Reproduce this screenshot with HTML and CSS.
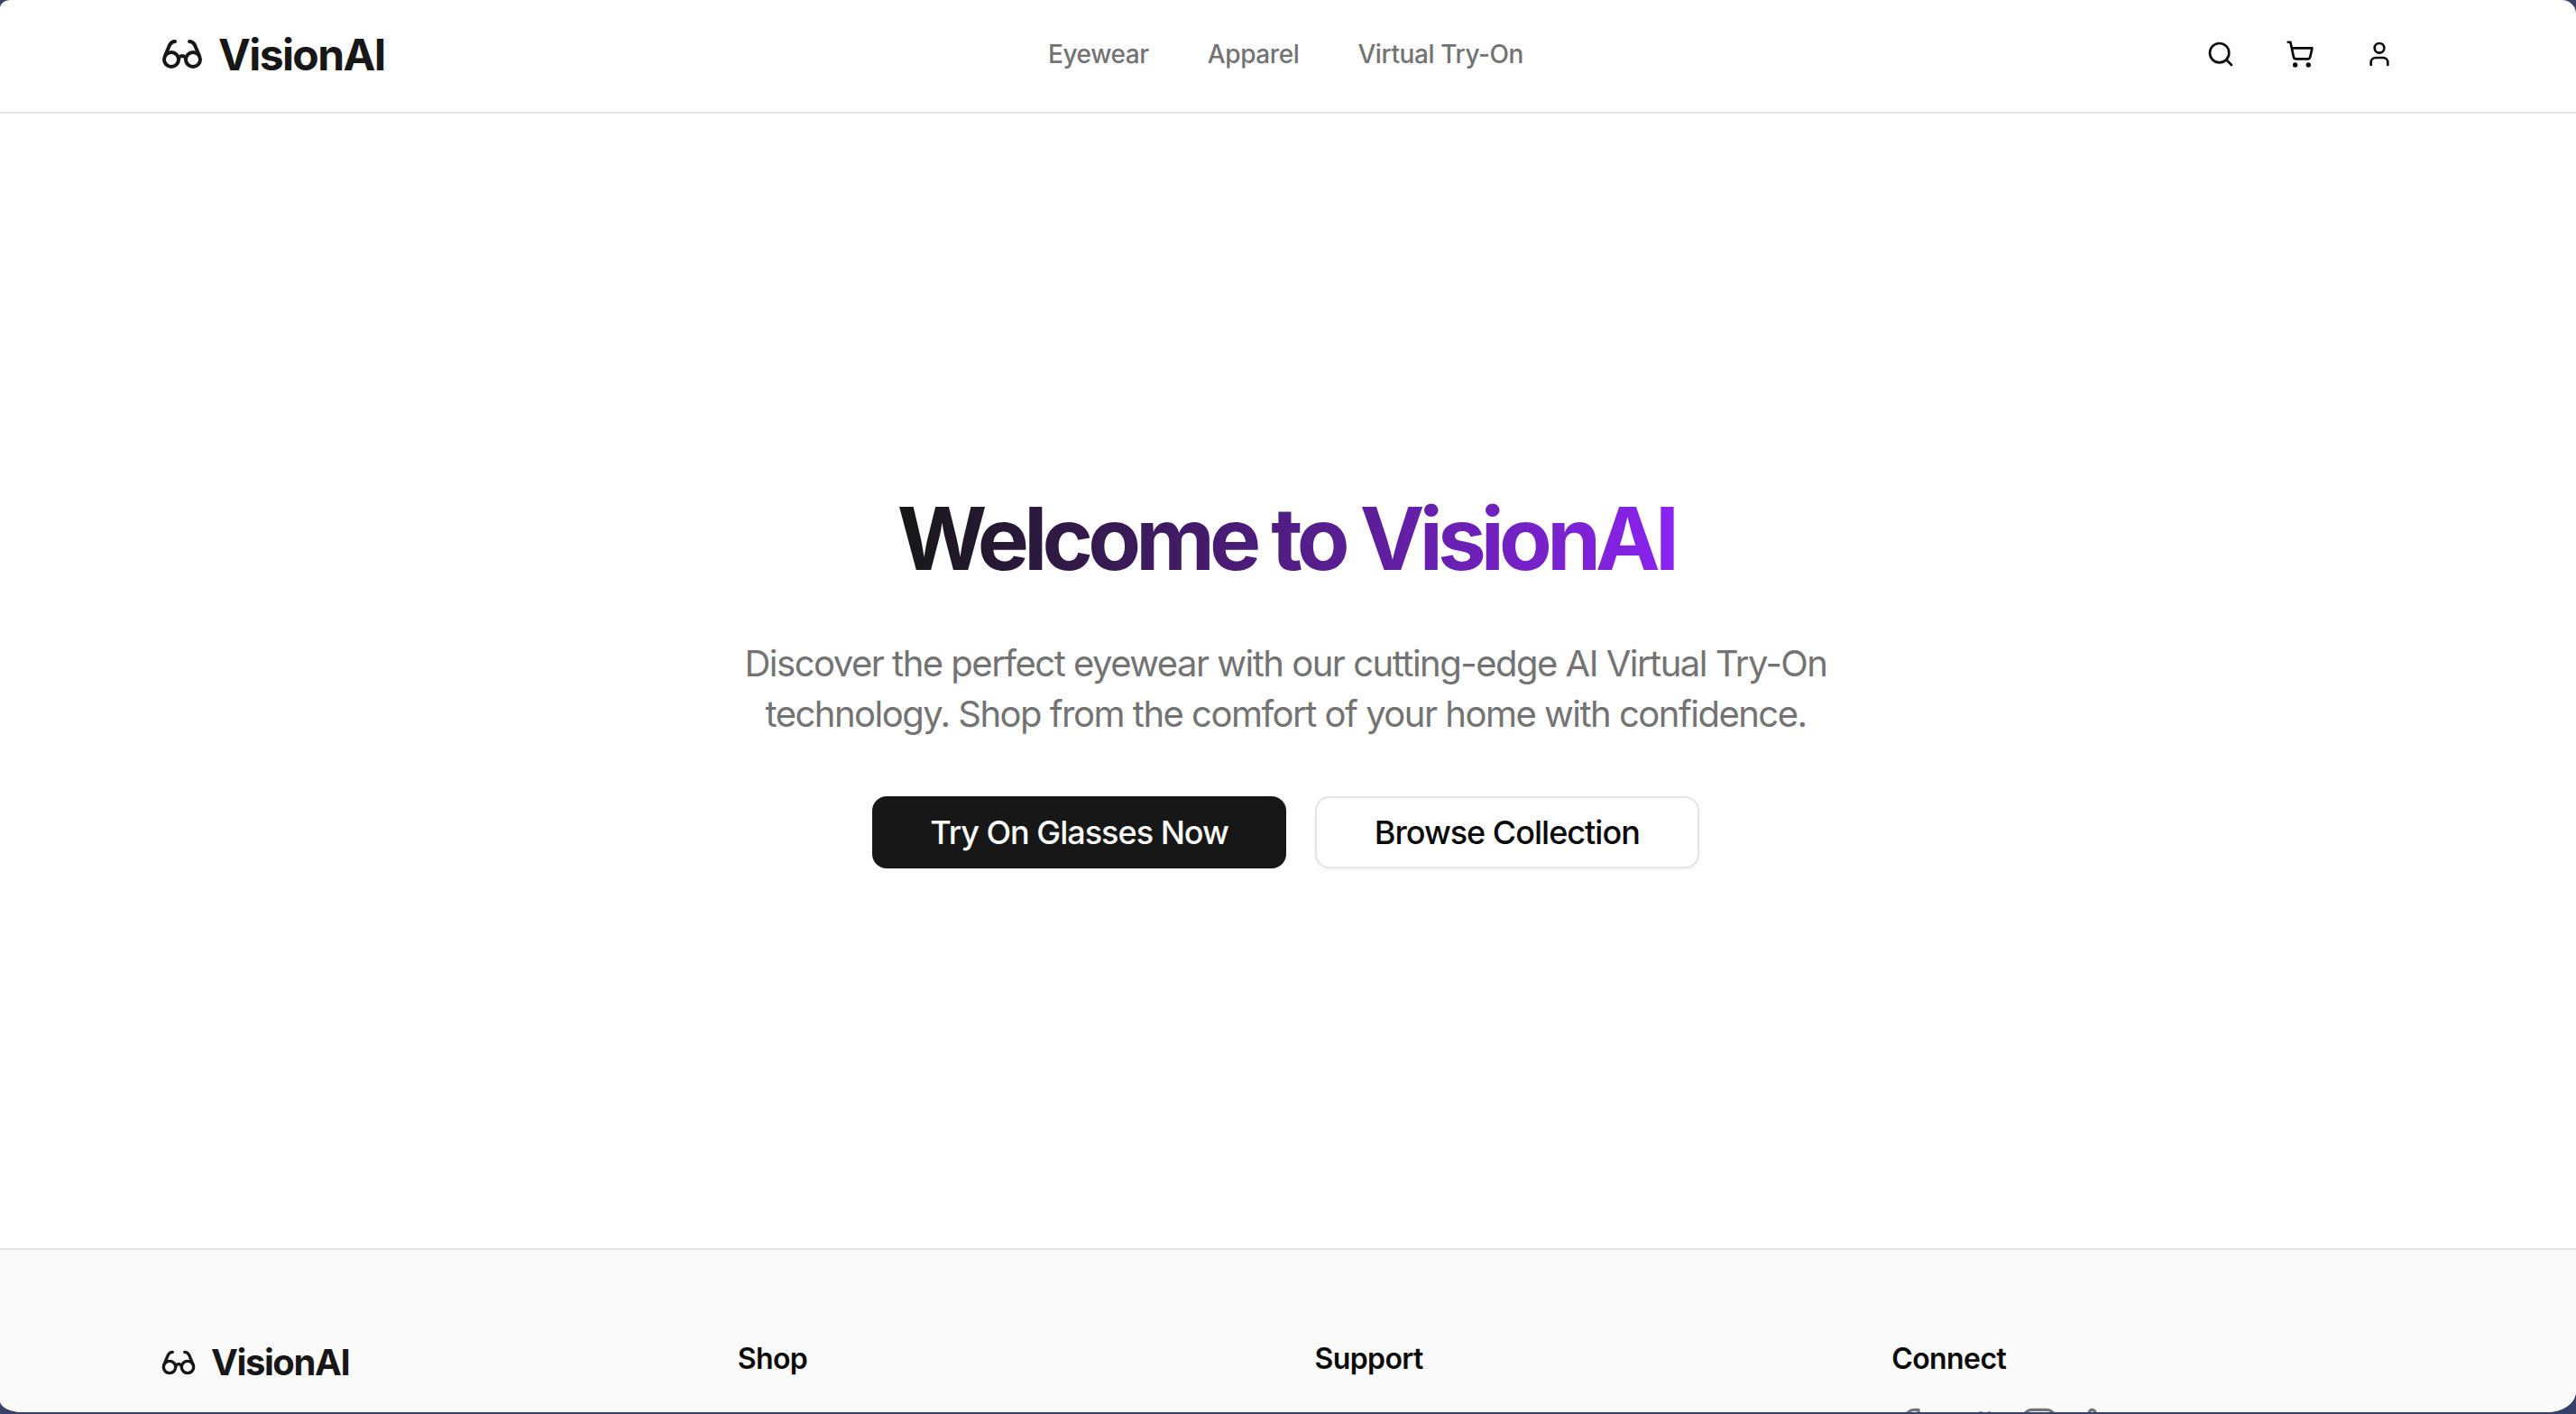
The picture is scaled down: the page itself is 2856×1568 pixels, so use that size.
FILE: index.html
```html
<!DOCTYPE html>
<html lang="en">
<head>
    <meta charset="UTF-8">
    <meta name="viewport" content="width=device-width, initial-scale=1.0">
    <title>VisionAI</title>
    <link rel="stylesheet" href="styles.css">
</head>
<body>
    <div class="window">
        <header class="site-header">
            <div class="inner header-row">
                <a class="logo" href="#">
                    <svg class="logo-icon" viewBox="0 0 24 24" fill="none" stroke="currentColor" stroke-width="2" stroke-linecap="round" stroke-linejoin="round">
                        <circle cx="6" cy="15" r="4"/>
                        <circle cx="18" cy="15" r="4"/>
                        <path d="M14 15a2 2 0 0 0-2-2 2 2 0 0 0-2 2"/>
                        <path d="M2.5 13 5 7c.7-1.3 1.4-2 3-2"/>
                        <path d="M21.5 13 19 7c-.7-1.3-1.5-2-3-2"/>
                    </svg>
                    <span>VisionAI</span>
                </a>
                <nav class="main-nav">
                    <a href="#">Eyewear</a>
                    <a href="#">Apparel</a>
                    <a href="#">Virtual Try-On</a>
                </nav>
                <div class="header-icons">
                    <button class="icon-btn" type="button">
                        <svg class="icon" viewBox="0 0 24 24" fill="none" stroke="currentColor" stroke-width="2" stroke-linecap="round" stroke-linejoin="round">
                            <circle cx="11" cy="11" r="8"/>
                            <path d="m21 21-4.3-4.3"/>
                        </svg>
                    </button>
                    <button class="icon-btn" type="button">
                        <svg class="icon" viewBox="0 0 24 24" fill="none" stroke="currentColor" stroke-width="2" stroke-linecap="round" stroke-linejoin="round">
                            <circle cx="8" cy="21" r="1"/>
                            <circle cx="19" cy="21" r="1"/>
                            <path d="M2.05 2.05h2l2.66 12.42a2 2 0 0 0 2 1.58h9.78a2 2 0 0 0 1.95-1.57l1.65-7.43H5.12"/>
                        </svg>
                    </button>
                    <button class="icon-btn" type="button">
                        <svg class="icon" viewBox="0 0 24 24" fill="none" stroke="currentColor" stroke-width="2" stroke-linecap="round" stroke-linejoin="round">
                            <path d="M19 21v-2a4 4 0 0 0-4-4H9a4 4 0 0 0-4 4v2"/>
                            <circle cx="12" cy="7" r="4"/>
                        </svg>
                    </button>
                </div>
            </div>
        </header>

        <main class="hero">
            <h1><span class="gradient-text">Welcome to VisionAI</span></h1>
            <p>Discover the perfect eyewear with our cutting-edge AI Virtual Try-On technology. Shop from the comfort of your home with confidence.</p>
            <div class="hero-buttons">
                <a class="btn btn-dark" href="#">Try On Glasses Now</a>
                <a class="btn btn-light" href="#">Browse Collection</a>
            </div>
        </main>

        <footer class="site-footer">
            <div class="inner footer-grid">
                <div>
                    <a class="logo logo-small" href="#">
                        <svg class="logo-icon" viewBox="0 0 24 24" fill="none" stroke="currentColor" stroke-width="2" stroke-linecap="round" stroke-linejoin="round">
                            <circle cx="6" cy="15" r="4"/>
                            <circle cx="18" cy="15" r="4"/>
                            <path d="M14 15a2 2 0 0 0-2-2 2 2 0 0 0-2 2"/>
                            <path d="M2.5 13 5 7c.7-1.3 1.4-2 3-2"/>
                            <path d="M21.5 13 19 7c-.7-1.3-1.5-2-3-2"/>
                        </svg>
                        <span>VisionAI</span>
                    </a>
                </div>
                <div><h3>Shop</h3></div>
                <div><h3>Support</h3></div>
                <div>
                    <h3>Connect</h3>
                    <div class="social">
                        <svg class="social-icon" viewBox="0 0 24 24" fill="none" stroke="currentColor" stroke-width="2" stroke-linecap="round" stroke-linejoin="round">
                            <path d="M18 2h-3a5 5 0 0 0-5 5v3H7v4h3v8h4v-8h3l1-4h-4V7a1 1 0 0 1 1-1h3z"/>
                        </svg>
                        <svg class="social-icon" viewBox="0 0 24 24" fill="none" stroke="currentColor" stroke-width="2" stroke-linecap="round" stroke-linejoin="round">
                            <path d="M22 4s-.7 2.1-2 3.4c1.6 10-9.4 17.3-18 11.6 2.2.1 4.4-.6 6-2C3 15.5.5 9.8 3 5.2c2.2 2.6 5.6 4.1 9 4-.9-4.2 4-6.6 7-3.8 1.1 0 3-1.4 3-1.4z"/>
                        </svg>
                        <svg class="social-icon" viewBox="0 0 24 24" fill="none" stroke="currentColor" stroke-width="2" stroke-linecap="round" stroke-linejoin="round">
                            <rect width="20" height="20" x="2" y="2" rx="5" ry="5"/>
                            <path d="M16 11.37A4 4 0 1 1 12.63 8 4 4 0 0 1 16 11.37z"/>
                        </svg>
                        <svg class="social-icon" viewBox="0 0 24 24" fill="none" stroke="currentColor" stroke-width="2" stroke-linecap="round" stroke-linejoin="round">
                            <path d="M16 8a6 6 0 0 1 6 6v7h-4v-7a2 2 0 0 0-2-2 2 2 0 0 0-2 2v7h-4v-7a6 6 0 0 1 6-6z"/>
                            <rect width="4" height="12" x="2" y="9"/>
                            <circle cx="4" cy="4" r="2"/>
                        </svg>
                    </div>
                </div>
            </div>
        </footer>
    </div>
</body>
</html>
```

FILE: styles.css
```css
html, body {
    height: 100%;
}

body {
    margin: 0;
    padding: 0;
    overflow: hidden;
    font-family: Inter, "Liberation Sans", sans-serif;
    background-color: #37416a;
    color: #171717;
}

a {
    text-decoration: none;
    color: inherit;
}

/* Window with the rounded corners, the desktop shows behind them */
.window {
    height: 1566px;
    display: flex;
    flex-direction: column;
    overflow: hidden;
    background: #fff;
    border-radius: 11px 16px 32px 25px / 9px 15px 23px 13px;
}

.inner {
    width: 2495px;
    margin-left: 178px;
}

/* Header */
.site-header {
    flex: none;
    height: 124px;
    border-bottom: 2px solid #e5e5e5;
}

.header-row {
    height: 120px;
    display: grid;
    grid-template-columns: 1fr auto 1fr;
    align-items: center;
}

.logo {
    display: flex;
    align-items: center;
    gap: 16px;
    font-size: 48px;
    font-weight: 700;
    letter-spacing: -1.6px;
    color: #171717;
}

.logo-icon {
    width: 48px;
    height: 48px;
}

.main-nav {
    display: flex;
    gap: 65px;
}

.main-nav a {
    font-size: 28px;
    font-weight: 500;
    letter-spacing: -0.4px;
    color: #737373;
}

.header-icons {
    display: flex;
    justify-content: flex-end;
    gap: 18px;
}

.icon-btn {
    display: flex;
    justify-content: center;
    width: 70px;
    padding: 0;
    border: none;
    background: none;
    color: #0a0a0a;
}

.icon {
    width: 32px;
    height: 32px;
}

/* Hero */
.hero {
    flex: none;
    box-sizing: border-box;
    height: 1258px;
    padding: 2px 5px 0 0;
    display: flex;
    flex-direction: column;
    align-items: center;
    justify-content: center;
    text-align: center;
}

.hero h1 {
    margin: 0 0 63px;
    font-size: 96px;
    line-height: 96px;
    font-weight: 700;
    letter-spacing: -5.8px;
}

.gradient-text {
    background-image: linear-gradient(to right, #171717, #8b23f0);
    -webkit-background-clip: text;
    background-clip: text;
    color: transparent;
}

.hero p {
    width: 1344px;
    margin: 0 0 63px;
    font-size: 40px;
    line-height: 56px;
    letter-spacing: -1.5px;
    color: #737373;
}

.hero-buttons {
    display: flex;
    gap: 32px;
}

.btn {
    display: flex;
    align-items: center;
    height: 80px;
    padding: 0 64px;
    box-sizing: border-box;
    border-radius: 16px;
    font-size: 36px;
    font-weight: 500;
    letter-spacing: -1px;
}

.btn-dark {
    background-color: #171717;
    color: #fafafa;
}

.btn-light {
    background-color: #fff;
    border: 2px solid #e5e5e5;
    box-shadow: 0 2px 4px rgba(0, 0, 0, 0.06);
    color: #0a0a0a;
}

/* Footer */
.site-footer {
    flex: 1;
    background-color: #fafafa;
    border-top: 2px solid #e5e5e5;
}

.footer-grid {
    display: grid;
    grid-template-columns: repeat(4, 1fr);
    gap: 64px;
    padding-top: 97px;
    box-sizing: border-box;
}

.logo-small {
    font-size: 40px;
    line-height: 56px;
    letter-spacing: -1.4px;
}

.logo-small .logo-icon {
    width: 40px;
    height: 40px;
}

.site-footer h3 {
    margin: 0 0 29px;
    font-size: 32px;
    line-height: 48px;
    font-weight: 600;
    letter-spacing: -0.6px;
    color: #0a0a0a;
}

.social {
    display: flex;
    gap: 32px;
    color: #737373;
}

.social-icon {
    width: 40px;
    height: 40px;
}
```
